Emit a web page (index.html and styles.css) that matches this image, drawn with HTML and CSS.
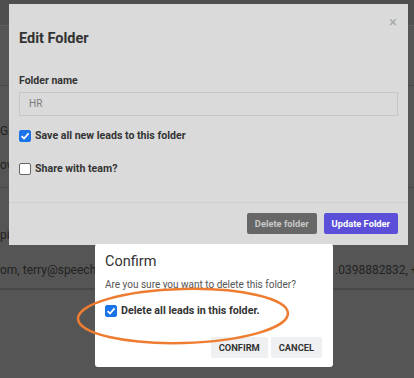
FILE: index.html
```html
<!DOCTYPE html>
<html>
<head>
    <title>Edit Folder</title>
    <link rel="stylesheet" href="styles.css">
</head>
<body>
    <!-- Trang phía sau (bị làm tối) -->
    <div class="page">
        <div class="page-top"></div>
        <div class="page-row row-head"></div>
        <div class="page-row row-mid">
            <div class="cell">Gl</div>
            <div class="cell">ow</div>
        </div>
        <div class="page-row row-low">
            <div class="cell">pi</div>
            <div class="cell contacts">
                <span class="clip">om, terry@speechm</span>
                <span class="phones">.0398882832, +6</span>
            </div>
        </div>
        <div class="page-row"></div>
    </div>

    <!-- Modal sửa folder -->
    <div class="modal">
        <div class="modal-header">
            <span class="close">&times;</span>
            <h2>Edit Folder</h2>
        </div>
        <div class="modal-body">
            <label class="field-label">Folder name</label>
            <div class="text-input">HR</div>
            <label class="check-row">
                <span class="box checked">
                    <svg viewBox="0 0 12 12" width="12" height="12"><path d="M2.6 6.2 L5 8.5 L9.6 3.4" fill="none" stroke="#fff" stroke-width="1.8"/></svg>
                </span>
                Save all new leads to this folder
            </label>
            <label class="check-row second">
                <span class="box"></span>
                Share with team?
            </label>
        </div>
        <div class="modal-footer">
            <button class="btn btn-delete">Delete folder</button>
            <button class="btn btn-update">Update Folder</button>
        </div>
    </div>

    <!-- Hộp xác nhận -->
    <div class="confirm">
        <div class="confirm-title">Confirm</div>
        <div class="confirm-text">Are you sure you want to delete this folder?</div>
        <label class="check-row confirm-check">
            <span class="box checked">
                <svg viewBox="0 0 12 12" width="12" height="12"><path d="M2.6 6.2 L5 8.5 L9.6 3.4" fill="none" stroke="#fff" stroke-width="1.8"/></svg>
            </span>
            Delete all leads in this folder.
        </label>
        <div class="confirm-actions">
            <button class="flat-btn">Confirm</button>
            <button class="flat-btn">Cancel</button>
        </div>
    </div>

    <!-- Vòng khoanh màu cam -->
    <svg class="circle-mark" width="220" height="64" viewBox="0 0 220 64">
        <ellipse cx="108" cy="31" rx="105" ry="27" fill="none" stroke="#ee7d31" stroke-width="2.5" transform="rotate(-1.5 108 31)"/>
    </svg>
</body>
</html>
```

FILE: styles.css
```css
body {
    margin: 0;
    font-family: Roboto, "Noto Sans", sans-serif;
    background: #555;
    width: 414px;
    height: 378px;
    overflow: hidden;
}

/* trang phía sau */
.page { color: #222; font-size: 12px; }
.page-top { height: 25px; background: #4f4f4f; border-bottom: 1px solid #5e5e5e; }
.page-row { border-bottom: 1px solid #484848; }
.row-head { height: 59px; }
.row-mid { height: 102px; padding-top: 38px; box-sizing: border-box; }
.row-mid .cell { height: 34px; }
.row-low { height: 101px; padding-top: 40px; box-sizing: border-box; }
.row-low .cell { height: 35px; }
.cell { white-space: nowrap; }
.contacts { display: flex; }
.clip { width: 95px; flex: none; }
.phones { margin-left: 240px; flex: none; }

/* modal */
.modal {
    position: absolute;
    left: 9px;
    top: 4px;
    width: 399px;
    height: 241px;
    background: #dadada;
    display: flex;
    flex-direction: column;
    color: #333;
}
.modal-header { position: relative; padding: 26px 10px 0 10px; height: 40px; }
.modal-header h2 { margin: 0; font-size: 14.5px; line-height: 17px; font-weight: 700; }
.close { position: absolute; right: 11px; top: 9px; color: #a8a8a8; font-size: 15px; }
.modal-body { padding: 0 10px; flex: 1; }
.field-label { display: block; font-size: 10.5px; line-height: 14px; font-weight: 700; margin: 4px 0 4px; }
.text-input {
    height: 22px;
    border: 1px solid #c6c6c6;
    padding-left: 9px;
    font-size: 10px;
    line-height: 22px;
    color: #7a7a7a;
}
.check-row { display: flex; align-items: center; gap: 4px; font-size: 10.6px; line-height: 15px; font-weight: 700; margin-top: 12px; }
.check-row.second { margin-top: 18px; }
.box {
    width: 10px;
    height: 10px;
    border: 1px solid #666;
    border-radius: 2px;
    background: #fff;
    display: inline-flex;
}
.box.checked { background: #1a73e8; border-color: #1a73e8; }
.box svg { margin: -1px; }
.modal-footer {
    border-top: 1px solid #cfcfcf;
    display: flex;
    justify-content: flex-end;
    gap: 7px;
    padding: 10px 10px 11px 0;
}
.btn {
    border: none;
    border-radius: 2px;
    height: 21px;
    font-family: Roboto, sans-serif;
    font-size: 9.3px;
    font-weight: 700;
    padding: 0 8px;
}
.btn-delete { background: #676767; color: #c8c8c8; }
.btn-update { background: #5b4fd9; color: #fff; }

/* confirm */
.confirm {
    position: absolute;
    left: 95px;
    top: 244px;
    width: 218px;
    height: 123px;
    background: #fff;
    border-radius: 3px;
    padding: 0 10px;
    color: #333;
}
.confirm-title { font-size: 14.5px; line-height: 17px; margin-top: 9px; }
.confirm-text { font-size: 10px; line-height: 12px; color: #555; margin-top: 9px; white-space: nowrap; }
.confirm-check { margin-top: 12px; font-size: 10.7px; }
.confirm-actions { display: flex; justify-content: flex-end; gap: 3px; margin-top: 19px; padding-right: 1px; }
.flat-btn {
    background: #eef0f2;
    border: none;
    border-radius: 2px;
    height: 21px;
    padding: 0 8px;
    font-family: Roboto, sans-serif;
    font-size: 9.3px;
    font-weight: 700;
    text-transform: uppercase;
    color: #333;
}

.circle-mark { position: absolute; left: 75px; top: 285px; }
```
